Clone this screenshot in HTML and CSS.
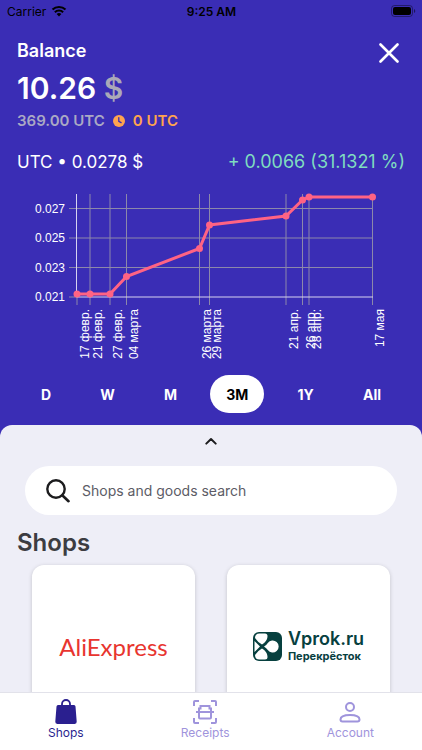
FILE: index.html
```
<!DOCTYPE html>
<html lang="en">
<head>
    <meta charset="UTF-8">
    <meta name="viewport" content="width=device-width, initial-scale=1.0">
    <title>Balance</title>
    <link rel="stylesheet" href="styles.css">
</head>
<body>
    <div class="app">
        <header class="status-bar">
            <div class="carrier">
                <span>Carrier</span>
                <svg width="16" height="12" viewBox="0 0 16 12">
                    <path d="M1.5 4.6a9.3 9.3 0 0 1 13 0M3.9 7.2a5.8 5.8 0 0 1 8.2 0" fill="none" stroke="#000" stroke-width="2.1"/>
                    <path d="M8 11.6L5.6 9.1a3.4 3.4 0 0 1 4.8 0z"/>
                </svg>
            </div>
            <span class="time">9:25 AM</span>
            <svg class="battery" width="25" height="12" viewBox="0 0 25 12">
                <rect x="0.5" y="0.5" width="21" height="11" rx="3" fill="none" stroke="#000" stroke-opacity="0.4"/>
                <rect x="2" y="2" width="18" height="8" rx="2"/>
                <path d="M23 4a2.2 2.2 0 0 1 0 4z" fill-opacity="0.5"/>
            </svg>
        </header>

        <section class="balance">
            <div class="balance-top">
                <h1>Balance</h1>
                <button class="close" aria-label="Close">
                    <svg width="20" height="20" viewBox="0 0 20 20">
                        <path d="M1.5 1.5l17 17M18.5 1.5l-17 17" stroke="#fff" stroke-width="2.6" stroke-linecap="round"/>
                    </svg>
                </button>
            </div>
            <div class="amount">10.26 <span>$</span></div>
            <div class="utc">
                <span>369.00 UTC</span>
                <svg width="12" height="12" viewBox="0 0 12 12">
                    <circle cx="6" cy="6" r="6" fill="#ffa44f"/>
                    <path d="M5.8 2.6v3.7l2.3 1.3" fill="none" stroke="#3a2db5" stroke-width="1.3" stroke-linecap="round"/>
                </svg>
                <span class="pending">0 UTC</span>
            </div>
            <div class="rate">
                <span>UTC • 0.0278 $</span>
                <span class="growth">+ 0.0066 (31.1321 %)</span>
            </div>
        </section>

        <svg class="chart" viewBox="0 0 422 178" role="img" aria-label="UTC rate for 3 months">
            <g class="grid">
                <path d="M69 23.5H373M69 53H373M69 82.5H373M69 112H77"/>
                <path d="M77 112V120M90 9V120M110 9V120M126.5 9V120M199.5 9V120M209.5 9V120M286 9V120M302.5 9V120M309 9V120M372.5 9V120"/>
            </g>
            <path class="axis" d="M76.5 9V112H373"/>
            <polyline class="line" points="77,109 90,109 110,109 126.5,91.5 199.5,63.5 209.5,40 286,31 302.5,15 309,12 372.5,12"/>
            <g class="dots">
                <circle cx="77" cy="109" r="3.5"/>
                <circle cx="90" cy="109" r="3.5"/>
                <circle cx="110" cy="109" r="3.5"/>
                <circle cx="126.5" cy="91.5" r="3.5"/>
                <circle cx="199.5" cy="63.5" r="3.5"/>
                <circle cx="209.5" cy="40" r="3.5"/>
                <circle cx="286" cy="31" r="3.5"/>
                <circle cx="302.5" cy="15" r="3.5"/>
                <circle cx="309" cy="12" r="3.5"/>
                <circle cx="372.5" cy="12" r="3.5"/>
            </g>
            <g class="labels">
                <text x="65" y="28">0.027</text>
                <text x="65" y="57">0.025</text>
                <text x="65" y="87">0.023</text>
                <text x="65" y="116">0.021</text>
                <text transform="translate(89 124) rotate(-90)">17 февр.</text>
                <text transform="translate(102 124) rotate(-90)">21 февр.</text>
                <text transform="translate(122 124) rotate(-90)">27 февр.</text>
                <text transform="translate(138 124) rotate(-90)">04 марта</text>
                <text transform="translate(211 124) rotate(-90)">26 марта</text>
                <text transform="translate(221 124) rotate(-90)">29 марта</text>
                <text transform="translate(298 124) rotate(-90)">21 апр.</text>
                <text transform="translate(315 124) rotate(-90)">26 апр.</text>
                <text transform="translate(321 124) rotate(-90)">28 апр.</text>
                <text transform="translate(384 124) rotate(-90)">17 мая</text>
            </g>
        </svg>

        <div class="periods">
            <button>D</button>
            <button>W</button>
            <button>M</button>
            <button class="active">3M</button>
            <button>1Y</button>
            <button>All</button>
        </div>

        <main class="sheet">
            <button class="handle" aria-label="Expand">
                <svg width="12" height="8" viewBox="0 0 12 8">
                    <path d="M1.3 6.6L6 2l4.7 4.6" fill="none" stroke="#1c1c1e" stroke-width="2" stroke-linecap="round" stroke-linejoin="round"/>
                </svg>
            </button>
            <label class="search">
                <svg width="24" height="24" viewBox="0 0 24 24">
                    <circle cx="10" cy="10" r="8.7" fill="none" stroke="#1c1c1e" stroke-width="2.4"/>
                    <path d="M16.5 16.5l6 5.7" stroke="#1c1c1e" stroke-width="2.6" stroke-linecap="round"/>
                </svg>
                <input type="text" placeholder="Shops and goods search" aria-label="Shops and goods search">
            </label>
            <h2>Shops</h2>
            <div class="shops">
                <a class="card" href="#">
                    <span class="aliexpress">AliExpress</span>
                </a>
                <a class="card" href="#">
                    <svg width="29" height="29" viewBox="0 0 29 29">
                        <rect width="29" height="29" rx="6" fill="#07403f"/>
                        <path d="M2 6q0-4.500 4.500-4.500H12q2.500 0 2.500 2.500c0 4-2.500 6.500-5.500 8.500Q5 10.500 2 6zM1.500 9l5.500 5.500L1.500 20zM2 23q3-4.500 7-6.500c3 2 5.500 4.500 5.500 8.500q0 2.500-2.500 2.500H6.500Q2 27.500 2 23z" fill="#fff"/>
                        <path d="M11 14.500q2.500-1.500 3.800-3.500a6 6 0 1 1 0 7q-1.300-2-3.800-3.500z" fill="#fff"/>
                    </svg>
                    <span class="vprok">
                        <span class="vprok-name">Vprok.ru</span>
                        <span class="vprok-sub">Перекрёсток</span>
                    </span>
                </a>
            </div>
        </main>

        <nav class="tabs">
            <a class="active" href="#">
                <svg width="24" height="26" viewBox="0 0 24 26">
                    <path d="M4 6h16q1.300 0 1.500 1.600l1.200 15q.2 2.400-2 2.400H3.300q-2.200 0-2-2.400l1.200-15Q2.700 6 4 6z" fill="currentColor"/>
                    <path d="M8 7V5a4 4 0 0 1 8 0v2" fill="none" stroke="currentColor" stroke-width="1.8"/>
                </svg>
                <span>Shops</span>
            </a>
            <a href="#">
                <svg width="26" height="26" viewBox="0 0 26 26" fill="none" stroke="currentColor" stroke-width="2">
                    <path d="M2 7V3q0-1 1-1h4M19 2h4q1 0 1 1v4M24 19v4q0 1-1 1h-4M7 24H3q-1 0-1-1v-4"/>
                    <path d="M4 13h18M7 13V9.500h1.500V7h9v2.500H19V13M7 13v5.500q0 1 1 1h10q1 0 1-1V13"/>
                </svg>
                <span>Receipts</span>
            </a>
            <a href="#">
                <svg width="24" height="26" viewBox="0 0 24 26" fill="none" stroke="currentColor" stroke-width="2">
                    <circle cx="12" cy="8" r="4"/>
                    <path d="M2.500 20.500c0-3 4.500-4.500 9.500-4.500s9.500 1.500 9.500 4.500q0 2-2 2h-15q-2 0-2-2z"/>
                </svg>
                <span>Account</span>
            </a>
        </nav>
    </div>
</body>
</html>
```
FILE: styles.css
```
* {
    box-sizing: border-box;
}
body {
    margin: 0;
    font-family: Inter, sans-serif;
    background: #3a2db5;
    color: #fff;
}
h1, h2 {
    margin: 0;
}
button {
    border: none;
    padding: 0;
    background: none;
    color: inherit;
    font: inherit;
    cursor: pointer;
}
a {
    text-decoration: none;
}
svg {
    display: block;
    flex-shrink: 0;
}
.app {
    display: flex;
    flex-direction: column;
    height: 100vh;
    overflow: hidden;
}
.status-bar {
    display: grid;
    grid-template-columns: 1fr auto 1fr;
    align-items: center;
    height: 22px;
    padding: 0 6px 0 7px;
    color: #000;
    font-size: 12px;
}
.carrier {
    display: flex;
    align-items: center;
    gap: 5px;
}
.time {
    font-weight: 600;
}
.battery {
    justify-self: end;
}

/* balance */
.balance {
    padding: 17px 17px 0;
}
.balance-top {
    display: flex;
    justify-content: space-between;
    height: 32px;
}
h1 {
    font-size: 18px;
    line-height: 24px;
    font-weight: 600;
}
.close {
    align-self: flex-start;
    padding: 4px 6px;
}
.amount {
    font-size: 30px;
    line-height: 34px;
    font-weight: 600;
}
.amount span {
    color: #aaa9b8;
}
.utc {
    display: flex;
    align-items: center;
    gap: 8px;
    margin-top: 6px;
    font-size: 15px;
    line-height: 20px;
    font-weight: 600;
    color: #aaa9c4;
}
.utc .pending {
    color: #ffa44f;
}
.rate {
    display: flex;
    justify-content: space-between;
    margin-top: 18px;
    font-size: 17px;
    line-height: 26px;
}
.growth {
    color: #7fdcc0;
    font-size: 18px;
}

/* chart */
.chart {
    width: 100%;
    margin-top: 10px;
}
.grid {
    fill: none;
    stroke: #8c88aa;
    stroke-width: 1;
}
.axis {
    fill: none;
    stroke: #d6d3f0;
    stroke-width: 1;
}
.line {
    fill: none;
    stroke: #ff6384;
    stroke-width: 3;
}
.dots {
    fill: #ff6384;
}
.labels {
    fill: #fff;
    font-family: "Liberation Sans", Arial, sans-serif;
    font-size: 12px;
    text-anchor: end;
}

.periods {
    display: flex;
    justify-content: space-between;
    margin: 12px 25px;
}
.periods button {
    height: 38px;
    padding: 0 16px;
    border-radius: 19px;
    font-size: 14px;
    font-weight: 700;
}
.periods .active {
    background: #fff;
    color: #000;
}

/* bottom sheet */
.sheet {
    display: flex;
    flex: 1;
    flex-direction: column;
    min-height: 0;
    overflow: hidden;
    border-radius: 12px 12px 0 0;
    background: #eeeef7;
}
.handle {
    align-self: center;
    padding: 12px 12px 21px;
}
.search {
    display: flex;
    flex-shrink: 0;
    align-items: center;
    gap: 12px;
    height: 49px;
    margin: 0 25px;
    padding: 0 21px;
    border-radius: 25px;
    background: #fff;
}
.search input {
    flex: 1;
    min-width: 0;
    padding: 0;
    border: none;
    outline: none;
    background: none;
    font-family: inherit;
    font-size: 14px;
}
.search input::placeholder {
    color: #5c5c66;
}
h2 {
    padding: 12px 17px 0;
    font-size: 24px;
    line-height: 32px;
    font-weight: 600;
    color: #3c3c41;
}
.shops {
    display: grid;
    grid-template-columns: 1fr 1fr;
    gap: 32px;
    padding: 6px 32px 0;
}
.card {
    display: flex;
    align-items: center;
    justify-content: center;
    gap: 6px;
    height: 162px;
    border-radius: 12px;
    background: #fff;
    box-shadow: 0 1px 4px rgba(0, 0, 0, 0.18);
}
.aliexpress {
    font-family: Lato, sans-serif;
    font-size: 24px;
    color: #e8352f;
}
.vprok {
    display: flex;
    flex-direction: column;
    color: #07403f;
}
.vprok-name {
    font-size: 18px;
    line-height: 20px;
    font-weight: 600;
}
.vprok-sub {
    font-size: 11px;
    line-height: 14px;
    font-weight: 700;
}

.tabs {
    display: flex;
    justify-content: space-between;
    height: 58px;
    padding: 6px 48px 0;
    border-top: 1px solid #e2e2ea;
    background: #fff;
}
.tabs a {
    display: flex;
    flex-direction: column;
    align-items: center;
    color: #9f94dc;
    font-size: 12px;
    line-height: 16px;
}
.tabs .active {
    color: #2a1f8f;
}
```
